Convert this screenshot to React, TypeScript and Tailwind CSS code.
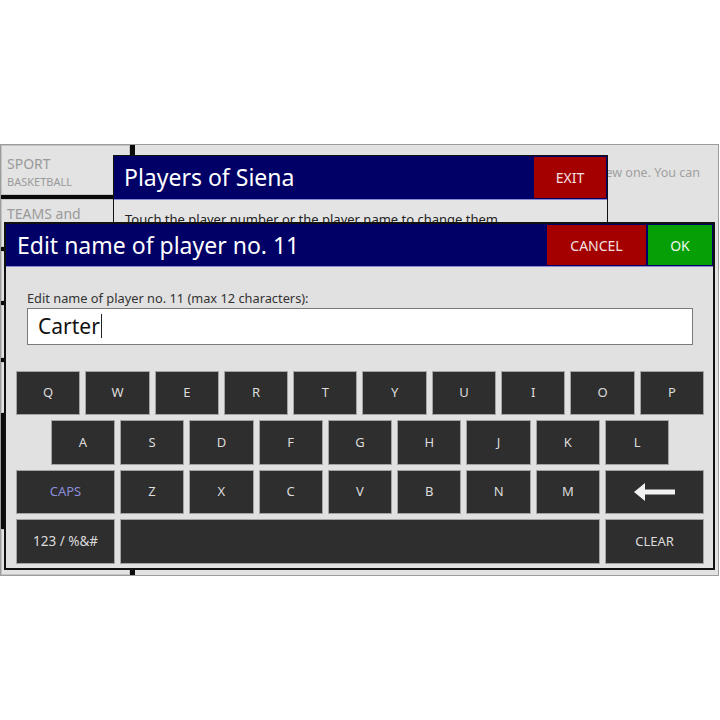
// Edit-player-name keyboard dialog over the "Players of Siena" list
const ROW1 = ['Q', 'W', 'E', 'R', 'T', 'Y', 'U', 'I', 'O', 'P'];
const ROW2 = ['A', 'S', 'D', 'F', 'G', 'H', 'J', 'K', 'L'];
const ROW3 = ['Z', 'X', 'C', 'V', 'B', 'N', 'M'];

// col-start classes written out so tailwind picks them up
const START1 = ['col-start-1', 'col-start-3', 'col-start-5', 'col-start-7', 'col-start-9', 'col-start-11', 'col-start-13', 'col-start-15', 'col-start-17', 'col-start-19'];
const START2 = ['col-start-2', 'col-start-4', 'col-start-6', 'col-start-8', 'col-start-10', 'col-start-12', 'col-start-14', 'col-start-16', 'col-start-18'];
const START3 = ['col-start-4', 'col-start-6', 'col-start-8', 'col-start-10', 'col-start-12', 'col-start-14', 'col-start-16'];

function Key({ label, className = '' }: { label?: React.ReactNode; className?: string }) {
  return (
    <div
      className={`flex items-center justify-center border border-[#a4a4a4] bg-[#2e2e2e] text-[13px] text-[#dcdcdc] ${className}`}
    >
      {label}
    </div>
  );
}

function BackArrow() {
  return (
    <svg width="42" height="18" viewBox="0 0 42 18" aria-hidden>
      <path d="M0 9 L11 0 L11 6.5 L41 6.5 L41 11.5 L11 11.5 L11 18 Z" fill="#f2f2f2" />
    </svg>
  );
}

function Sidebar() {
  return (
    <div className="flex w-[134px] shrink-0 flex-col gap-[4px] bg-[#0a0a0a] pr-[5px]">
      <div className="h-[50px] border border-[#c4c4c4] bg-[#e3e3e3] px-[5px] pt-[11px] leading-none text-[#9a9a9a]">
        <div className="text-[14px]">SPORT</div>
        <div className="mt-[5px] text-[11px]">BASKETBALL</div>
      </div>
      <div className="h-[48px] border border-[#c4c4c4] bg-[#e3e3e3] px-[5px] pt-[7px] text-[14px] leading-none text-[#9a9a9a]">
        TEAMS and
      </div>
      <div className="h-[50px] border border-[#c4c4c4] bg-[#e3e3e3]" />
      <div className="h-[53px] border border-[#c4c4c4] bg-[#e3e3e3]" />
      <div className="h-[51px] border border-[#c4c4c4] bg-[#e3e3e3]" />
      <div className="h-[108px]" />
      <div className="flex-1 border border-[#c4c4c4] bg-[#e3e3e3]" />
    </div>
  );
}

export default function App() {
  return (
    <div
      className="flex h-[720px] w-[720px] items-center bg-white"
      style={{ fontFamily: '"Noto Sans", "Open Sans", sans-serif' }}
    >
      <div className="relative flex h-[432px] w-[719px] overflow-hidden border border-[#9c9c9c] bg-[#e2e2e2]">
        <Sidebar />
        <div className="flex flex-1 justify-end pt-[19px] pr-[18px] text-[12.5px] whitespace-nowrap text-[#a0a0a0]">
          ew one. You can
        </div>

        {/* Players of Siena dialog (behind) */}
        <div className="absolute left-[112px] top-[10px] w-[495px] border border-[#111] bg-[#e4e4e4]">
          <div className="flex h-[44px] items-stretch border-b border-[#8a8ad0] bg-[#000066]">
            <div className="flex flex-1 items-center pl-[10px] text-[23px] text-white">Players of Siena</div>
            <div className="my-[1px] mr-[1px] flex w-[72px] items-center justify-center bg-[#a40000] text-[14px] text-[#f3e0e0]">
              EXIT
            </div>
          </div>
          <div className="px-[11px] pt-[10px] pb-[20px] text-[13px] text-[#222]">
            Touch the player number or the player name to change them.
          </div>
        </div>

        {/* Edit name dialog */}
        <div className="absolute left-[3px] top-[77px] flex h-[348px] w-[711px] flex-col border-2 border-[#111] bg-[#e1e1e1]">
          <div className="flex h-[43px] items-stretch border-b border-[#8a8ad0] bg-[#000066]">
            <div className="flex flex-1 items-center pl-[11px] text-[23px] text-white">Edit name of player no. 11</div>
            <div className="my-[1px] flex w-[99px] items-center justify-center bg-[#a40000] text-[14px] text-[#f3e0e0]">
              CANCEL
            </div>
            <div className="my-[1px] mr-[1px] ml-[2px] flex w-[64px] items-center justify-center bg-[#06a006] text-[14px] text-[#eef7ee]">
              OK
            </div>
          </div>

          <div className="flex flex-col px-[21px] pt-[25px]">
            <div className="text-[12.8px] leading-none text-[#333]">Edit name of player no. 11 (max 12 characters):</div>
            <div className="mt-[3px] flex h-[37px] w-[666px] items-center border border-[#7a7a7a] bg-white pl-[10px] text-[21px] text-[#111]">
              Carter<span className="ml-[1px] inline-block h-[24px] w-[1.5px] bg-[#222]" />
            </div>
          </div>

          <div className="mt-[26px] ml-[10px] grid w-[688px] grid-cols-20 grid-rows-[repeat(4,44.5px)] gap-x-[5px] gap-y-[5px]">
            {ROW1.map((k, i) => (
              <Key key={k} label={k} className={`row-start-1 col-span-2 ${START1[i]}`} />
            ))}
            {ROW2.map((k, i) => (
              <Key key={k} label={k} className={`row-start-2 col-span-2 ${START2[i]}`} />
            ))}
            <Key label={<span className="text-[#8c8cdc]">CAPS</span>} className="row-start-3 col-span-3 col-start-1" />
            {ROW3.map((k, i) => (
              <Key key={k} label={k} className={`row-start-3 col-span-2 ${START3[i]}`} />
            ))}
            <Key label={<BackArrow />} className="row-start-3 col-span-3 col-start-18" />
            <Key label={<span className="text-[13.5px]">123 / %&amp;#</span>} className="row-start-4 col-span-3 col-start-1" />
            <Key className="row-start-4 col-span-14 col-start-4" />
            <Key label="CLEAR" className="row-start-4 col-span-3 col-start-18" />
          </div>
        </div>
      </div>
    </div>
  );
}
